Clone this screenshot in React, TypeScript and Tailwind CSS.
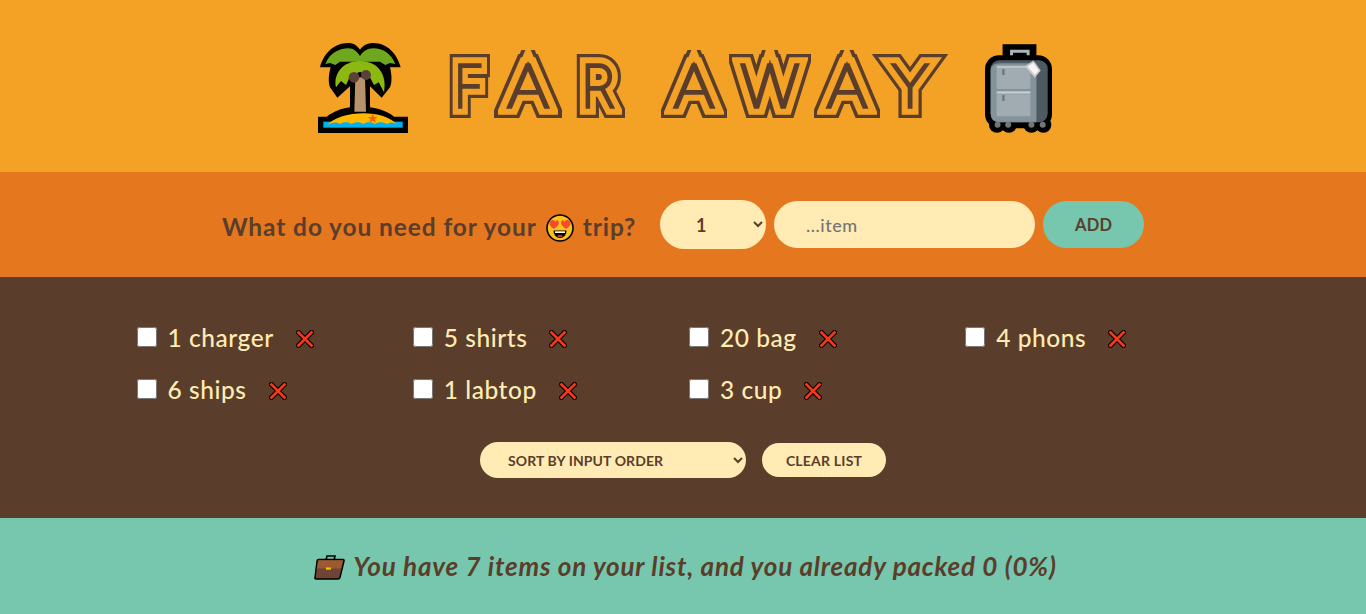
import { useState } from "react";

const items = [
  { id: 1, label: "1 charger" },
  { id: 2, label: "5 shirts" },
  { id: 3, label: "20 bag" },
  { id: 4, label: "4 phons" },
  { id: 5, label: "6 ships" },
  { id: 6, label: "1 labtop" },
  { id: 7, label: "3 cup" },
];

const titleLetters = [
  { ch: "F", cell: "w-[48px] scale-x-[0.9]" },
  { ch: "A", cell: "w-[70px] scale-x-[1.15]" },
  { ch: "R", cell: "w-[70px] scale-x-[0.95] mr-[26px]" },
  { ch: "A", cell: "w-[70px] scale-x-[1.12]" },
  { ch: "W", cell: "w-[82px] scale-x-[1.1]" },
  { ch: "A", cell: "w-[72px] scale-x-[1.12]" },
  { ch: "Y", cell: "w-[54px] scale-x-[1]" },
];

const TitleLayer = ({ className }: { className: string }) => (
  <div className={`flex h-[66px] items-center ${className}`}>
    {titleLetters.map((l, i) => (
      <span key={i} className={`inline-block text-center ${l.cell}`}>
        {l.ch}
      </span>
    ))}
  </div>
);

const Title = () => (
  <h1 className="relative h-[66px] w-[492px] font-['Inter',sans-serif] text-[58px] font-thin leading-none">
    <TitleLayer className="text-[#5a3e2b] [-webkit-text-stroke:22px_#5a3e2b]" />
    <TitleLayer className="absolute inset-0 text-[#f4a226] [-webkit-text-stroke:15.5px_#f4a226]" />
    <TitleLayer className="absolute inset-0 text-[#5a3e2b] [-webkit-text-stroke:3.5px_#5a3e2b]" />
  </h1>
);

const PalmIcon = () => (
  <svg viewBox="24 22 270 270" className="h-[90px] w-[90px]">
    <path d="M30 95 C40 55 70 22 115 22 C130 22 142 30 150 42 C158 30 172 22 190 22 C232 22 262 55 272 95 L240 95 C246 120 246 140 240 155 L215 186 L180 152 L180 215 C205 218 235 228 252 243 H294 V292 H24 V243 H50 C70 228 95 218 120 215 L120 152 L82 186 L60 155 C54 140 56 115 62 95 Z" fill="#000" />
    <rect x="40" y="258" width="238" height="18" fill="#00b0f0" />
    <path d="M52 268 C90 225 220 218 262 268 C250 258 240 260 230 265 C220 258 205 258 195 265 C185 258 170 258 160 265 C150 258 135 258 125 265 C115 258 100 258 90 265 C80 258 65 260 52 268 Z" fill="#ffb900" />
    <path d="M188 233 L192 244 L203 244 L194 251 L198 261 L188 255 L178 261 L182 251 L173 244 L184 244 Z" fill="#f7630c" />
    <path d="M136 125 H165 L168 228 H133 Z" fill="#b8926a" />
    <path d="M46 85 C60 50 90 38 115 38 C130 38 143 48 150 62 C157 48 172 38 190 38 C218 38 242 52 256 85 L240 82 L226 88 L210 78 L150 78 L90 78 L76 88 L60 82 Z" fill="#6fa81f" />
    <path d="M78 155 C70 118 95 76 150 76 C205 76 232 118 222 170 L206 140 L192 148 L178 122 L150 108 L120 122 L108 148 L93 136 Z" fill="#8cb812" />
    <circle cx="132" cy="125" r="16" fill="#5d4037" />
    <circle cx="168" cy="118" r="15" fill="#5d4037" />
  </svg>
);

const SuitcaseIcon = () => (
  <svg viewBox="30 25 202 267" className="h-[89px] w-[67px]">
    <rect x="83" y="25" width="102" height="60" fill="#000" />
    <path d="M110 76 V46 H160 V76" fill="none" stroke="#aab6bb" strokeWidth="9" />
    <rect x="30" y="58" width="202" height="220" rx="42" fill="#000" />
    <circle cx="66" cy="268" r="24" fill="#000" />
    <circle cx="102" cy="268" r="24" fill="#000" />
    <circle cx="170" cy="268" r="24" fill="#000" />
    <circle cx="206" cy="268" r="24" fill="#000" />
    <rect x="47" y="73" width="172" height="187" rx="26" fill="#4e5a62" />
    <path d="M47 105 Q47 82 75 82 H185 V260 H73 Q47 260 47 234 Z" fill="#84939a" />
    <rect x="65" y="94" width="102" height="66" rx="4" fill="#a0acb1" />
    <rect x="65" y="176" width="102" height="66" rx="2" fill="#a0acb1" />
    <rect x="65" y="90" width="102" height="6" fill="#bcc7ca" />
    <rect x="65" y="167" width="102" height="7" fill="#c4cdd0" />
    <rect x="82" y="100" width="7" height="18" fill="#6b7780" />
    <rect x="82" y="178" width="7" height="18" fill="#6b7780" />
    <path d="M150 92 L176 74 L198 104 L180 126 Z" fill="#c9c9c9" />
    <path d="M158 92 L176 81 L192 104 L180 118 Z" fill="#f5f5f5" />
    <circle cx="68" cy="268" r="9" fill="#757575" />
    <circle cx="100" cy="268" r="9" fill="#757575" />
    <circle cx="170" cy="268" r="9" fill="#757575" />
    <circle cx="204" cy="268" r="9" fill="#757575" />
  </svg>
);

const HeartEyes = () => (
  <svg viewBox="0 0 28 28" className="mx-[9px] inline-block h-7 w-7 align-[-6px]">
    <circle cx="14" cy="14" r="13" fill="#fcc21b" stroke="#000" strokeWidth="1.6" />
    <path d="M3.5 9.5 C3.5 5.5 8 5 9.5 8 C11 5 13.2 6.5 12.8 9.5 C12.4 12 9 14 8 15 C6.5 14 3.5 12 3.5 9.5 Z" fill="#f44a2e" />
    <path d="M24.5 9.5 C24.5 5.5 20 5 18.5 8 C17 5 14.8 6.5 15.2 9.5 C15.6 12 19 14 20 15 C21.5 14 24.5 12 24.5 9.5 Z" fill="#f44a2e" />
    <path d="M7.5 16.5 H20.5 C20.5 21 17.5 24 14 24 C10.5 24 7.5 21 7.5 16.5 Z" fill="#000" />
    <path d="M9 17.3 H19 V19 H9 Z" fill="#fff" />
    <path d="M11 22 C12 21 16 21 17 22 C16 23.2 12 23.2 11 22 Z" fill="#f44a2e" />
  </svg>
);

const Briefcase = () => (
  <svg viewBox="0 0 31 26" className="h-[26px] w-[31px]">
    <path d="M12 6 L13 2 H21 L20 6" fill="none" stroke="#000" strokeWidth="1.6" />
    <path d="M4.5 5.5 H29 Q30.5 5.5 30 7 L26 23.5 Q25.6 25 24 25 H2 Q0.5 25 1 23.5 L3 7 Q3.2 5.5 4.5 5.5 Z" fill="#6d4534" stroke="#000" strokeWidth="1.4" />
    <path d="M4.5 6.2 H29 L27 14.5 H2.8 Z" fill="#9c5a2e" />
    <rect x="12" y="13.5" width="5" height="2.2" fill="#ffb900" />
  </svg>
);

const CrossMark = () => (
  <svg viewBox="0 0 18 18" className="h-[18px] w-[18px]">
    <path d="M2.5 2.5 L15.5 15.5 M15.5 2.5 L2.5 15.5" stroke="#000" strokeWidth="5" strokeLinecap="square" />
    <path d="M2.5 2.5 L15.5 15.5 M15.5 2.5 L2.5 15.5" stroke="#f4381c" strokeWidth="2.8" strokeLinecap="square" />
  </svg>
);

const App = () => {
  const [qty, setQty] = useState("1");
  const [sortBy, setSortBy] = useState("input");

  return (
    <div className="flex h-[614px] flex-col font-['Lato',sans-serif] text-[#5a3e2b]">
      <header className="flex h-[172px] items-center justify-center bg-[#f4a226] pl-[4px] pt-[4px]">
        <PalmIcon />
        <div className="ml-[37px] mr-[48px] -translate-y-[2.5px]">
          <Title />
        </div>
        <SuitcaseIcon />
      </header>

      <form className="flex h-[105px] items-center justify-center bg-[#e5771f]">
        <h3 className="mr-6 pt-[5px] text-[24.5px] font-bold tracking-[0.9px]">
          What do you need for your
          <HeartEyes />
          trip?
        </h3>
        <select
          value={qty}
          onChange={(e) => setQty(e.target.value)}
          className="mr-2 h-[49px] w-[106px] rounded-full bg-[#ffebb3] pl-[32px] text-[18px] font-bold focus:outline-none"
        >
          {[1, 2, 3, 4, 5].map((n) => (
            <option key={n} value={n}>
              {n}
            </option>
          ))}
        </select>
        <input
          type="text"
          placeholder="...item"
          className="mr-2 h-[47px] w-[261px] rounded-full bg-[#ffebb3] px-8 text-[18px] font-medium tracking-[0.5px] placeholder:text-[#757575] focus:outline-none"
        />
        <button
          type="button"
          className="h-[47px] w-[101px] rounded-full bg-[#76c7ad] pt-[2px] text-[16.5px] font-bold tracking-[0.2px]"
        >
          ADD
        </button>
      </form>

      <main className="flex h-[241px] flex-col items-center bg-[#5a3e2b] pt-[40px]">
        <ul className="grid w-[1093px] grid-cols-4 gap-3 text-[#ffebb3]">
          {items.map((item) => (
            <li key={item.id} className="flex h-10 items-center">
              <input type="checkbox" className="mr-[11px] h-5 w-5 accent-[#e5771f]" />
              <span className="pt-[2px] text-[24.5px] font-medium leading-none tracking-[0.55px]">{item.label}</span>
              <button type="button" className="ml-[22px] mt-[3px]">
                <CrossMark />
              </button>
            </li>
          ))}
        </ul>
        <div className="mt-[33px] flex items-center">
          <select
            value={sortBy}
            onChange={(e) => setSortBy(e.target.value)}
            className="mr-4 h-9 w-[266px] rounded-full bg-[#ffebb3] pl-6 text-[14px] font-bold uppercase tracking-[0.1px] focus:outline-none"
          >
            <option value="input">Sort by input order</option>
            <option value="description">Sort by description</option>
            <option value="packed">Sort by packed status</option>
          </select>
          <button
            type="button"
            className="h-[34px] w-[124px] rounded-full bg-[#ffebb3] text-[14px] font-bold uppercase tracking-[0.2px]"
          >
            Clear list
          </button>
        </div>
      </main>

      <footer className="flex h-[96px] items-center justify-center bg-[#76c7ad] pl-[5px] pt-[1px]">
        <Briefcase />
        <em className="ml-2 text-[26px] font-bold tracking-[0.8px]">
          You have 7 items on your list, and you already packed 0 (0%)
        </em>
      </footer>
    </div>
  );
};

export default App;
